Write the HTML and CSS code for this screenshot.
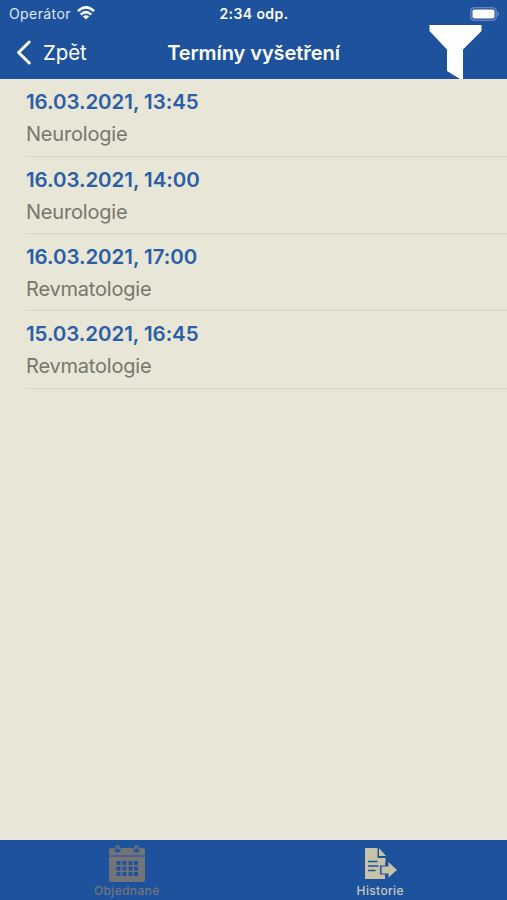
FILE: index.html
```html
<!DOCTYPE html>
<html lang="cs">
<head>
<meta charset="utf-8">
<title>Termíny vyšetření</title>
<link rel="stylesheet" href="styles.css">
</head>
<body>
<header class="header">
  <div class="status">
    <div class="carrier"><span>Operátor</span>
      <svg class="wifi" width="18" height="14" viewBox="0 0 18 14" fill="none" stroke="#fff" stroke-width="2.5"><path d="M.9 5.2Q9-2.5 17.1 5.2M3.8 8.6Q9 3.7 14.200 8.600"/><path d="M9 13.600 5.900 10.500Q9 8 12.100 10.500Z" fill="#fff" stroke="none"/></svg>
    </div>
    <time class="clock">2:34 odp.</time>
    <svg class="battery" width="30" height="14" viewBox="0 0 30 14"><rect x=".8" y=".7" width="25.4" height="12.6" rx="3.6" fill="none" stroke="#7898ca" stroke-width="1.1"/><rect x="2.5" y="2.5" width="22" height="9" rx="1.8" fill="#fff"/><path d="M27.7 4.8Q30.5 7 27.7 9.2Z" fill="#7898ca"/></svg>
  </div>
  <nav class="navbar">
    <a class="back"><svg width="16" height="25" viewBox="0 0 16 25"><path d="M13.200 2 2.600 12.500 13.200 23" fill="none" stroke="#fff" stroke-width="3" stroke-linecap="round" stroke-linejoin="round"/></svg><span>Zpět</span></a>
    <h1 class="title">Termíny vyšetření</h1>
    <svg class="filter" width="53" height="54" viewBox="0 0 53 54"><path d="M.5 0H52.500V6L34 24.500V54H31L18 46V24.500L.5 6Z" fill="#fff"/></svg>
  </nav>
</header>
<main class="list">
  <article class="row"><div class="date">16.03.2021, 13:45</div><div class="dept">Neurologie</div></article>
  <article class="row"><div class="date">16.03.2021, 14:00</div><div class="dept">Neurologie</div></article>
  <article class="row"><div class="date">16.03.2021, 17:00</div><div class="dept">Revmatologie</div></article>
  <article class="row"><div class="date">15.03.2021, 16:45</div><div class="dept">Revmatologie</div></article>
</main>
<footer class="tabs">
  <a class="tab"><svg width="38" height="38" viewBox="0 0 38 38"><path d="M1 10.500V5Q1 3 3 3H6.500V4.500Q6.500 7.500 9.500 7.500T12.500 4.500V3H25.500V4.500Q25.500 7.500 28.500 7.500T31.500 4.500V3H35Q37 3 37 5V10.500Z" fill="#737477"/><path d="M8 5V2.500Q8 .8 9.500 .8T11 2.500V5M27 5V2.500Q27 .8 28.500 .8T30 2.500V5" fill="none" stroke="#737477" stroke-width="1.5"/><path d="M1 11.500H37V35Q37 37 35 37H3Q1 37 1 35Z" fill="#737477"/><path d="M8.500 16h4v4h-4zM14.500 16h4v4h-4zM20.500 16h4v4h-4zM26 16h4v4h-4zM8.500 21.500h4v4h-4zM14.500 21.500h4v4h-4zM20.500 21.500h4v4h-4zM26 21.500h4v4h-4zM8.500 27h4v4h-4zM14.500 27h4v4h-4zM20.500 27h4v4h-4zM26 27h4v4h-4z" fill="#1e529d"/></svg><span class="label wide">Objednané</span></a>
  <a class="tab active"><svg width="34" height="38" viewBox="0 0 34 38"><path d="M2 3H14.500V13H22.500V17.500H22V20.500H17V29.500H22V34H2Z" fill="#c6c3a8"/><path d="M16 3 23 11H16Z" fill="#c6c3a8"/><path d="M5 16.500H14.500M5 21H15.500M5 25.500H12.500" stroke="#1e529d" stroke-width="1.5"/><path d="M18.500 21.500H25.500V17L34 25 25.500 32.500V28.500H18.500Z" fill="#c6c3a8"/></svg><span class="label wide">Historie</span></a>
</footer>
</body>
</html>
```
FILE: styles.css
```css
* { box-sizing: border-box; }
body {
  margin: 0;
  height: 900px;
  display: flex;
  flex-direction: column;
  overflow: hidden;
  background: #e8e6d7;
  font-family: Inter, "Liberation Sans", sans-serif;
}
.header {
  height: 79px;
  flex: none;
  background: #1e529d;
  color: #fff;
}
.status {
  height: 25px;
  padding: 2px 8px 0 9px;
  display: grid;
  grid-template-columns: 1fr auto 1fr;
  align-items: center;
}
.carrier {
  display: flex;
  align-items: center;
  gap: 6px;
  font-size: 14px;
  color: #dfe8f6;
  letter-spacing: .4px;
}
.wifi { margin-top: -2px; }
.clock {
  font-size: 14px;
  font-weight: 600;
  letter-spacing: .4px;
}
.battery { justify-self: end; margin-right: -1px; }
.navbar {
  height: 54px;
  padding: 0 16px;
  display: grid;
  grid-template-columns: 1fr auto 1fr;
  align-items: center;
}
.back {
  display: flex;
  align-items: center;
  gap: 11px;
  font-size: 20.5px;
  letter-spacing: -.1px;
}
.title {
  margin: 0;
  padding-top: 1px;
  font-size: 20px;
  font-weight: 600;
  letter-spacing: -.06px;
  white-space: nowrap;
}
.filter { justify-self: end; margin-right: 9px; }
.list { flex: 1; padding-left: 26px; }
.row {
  height: 77.4px;
  padding-top: 9px;
  border-bottom: 1px solid #d8d6ca;
}
.row:first-child { height: 77.6px; }
.date {
  font-size: 20.5px;
  line-height: 28px;
  font-weight: 600;
  letter-spacing: -.06px;
  color: #2b5ea7;
}
.dept {
  margin-top: 4px;
  font-size: 20px;
  line-height: 28px;
  letter-spacing: -.2px;
  color: #77766c;
}
.tabs {
  height: 60px;
  flex: none;
  display: flex;
  background: #1e529d;
}
.tab {
  flex: 1;
  padding-top: 5px;
  display: flex;
  flex-direction: column;
  align-items: center;
  color: #737477;
}
.active { color: #c6c8bf; }
.label {
  font-size: 12px;
  line-height: 16px;
  font-weight: 500;
}
.wide { letter-spacing: .35px; }
```
